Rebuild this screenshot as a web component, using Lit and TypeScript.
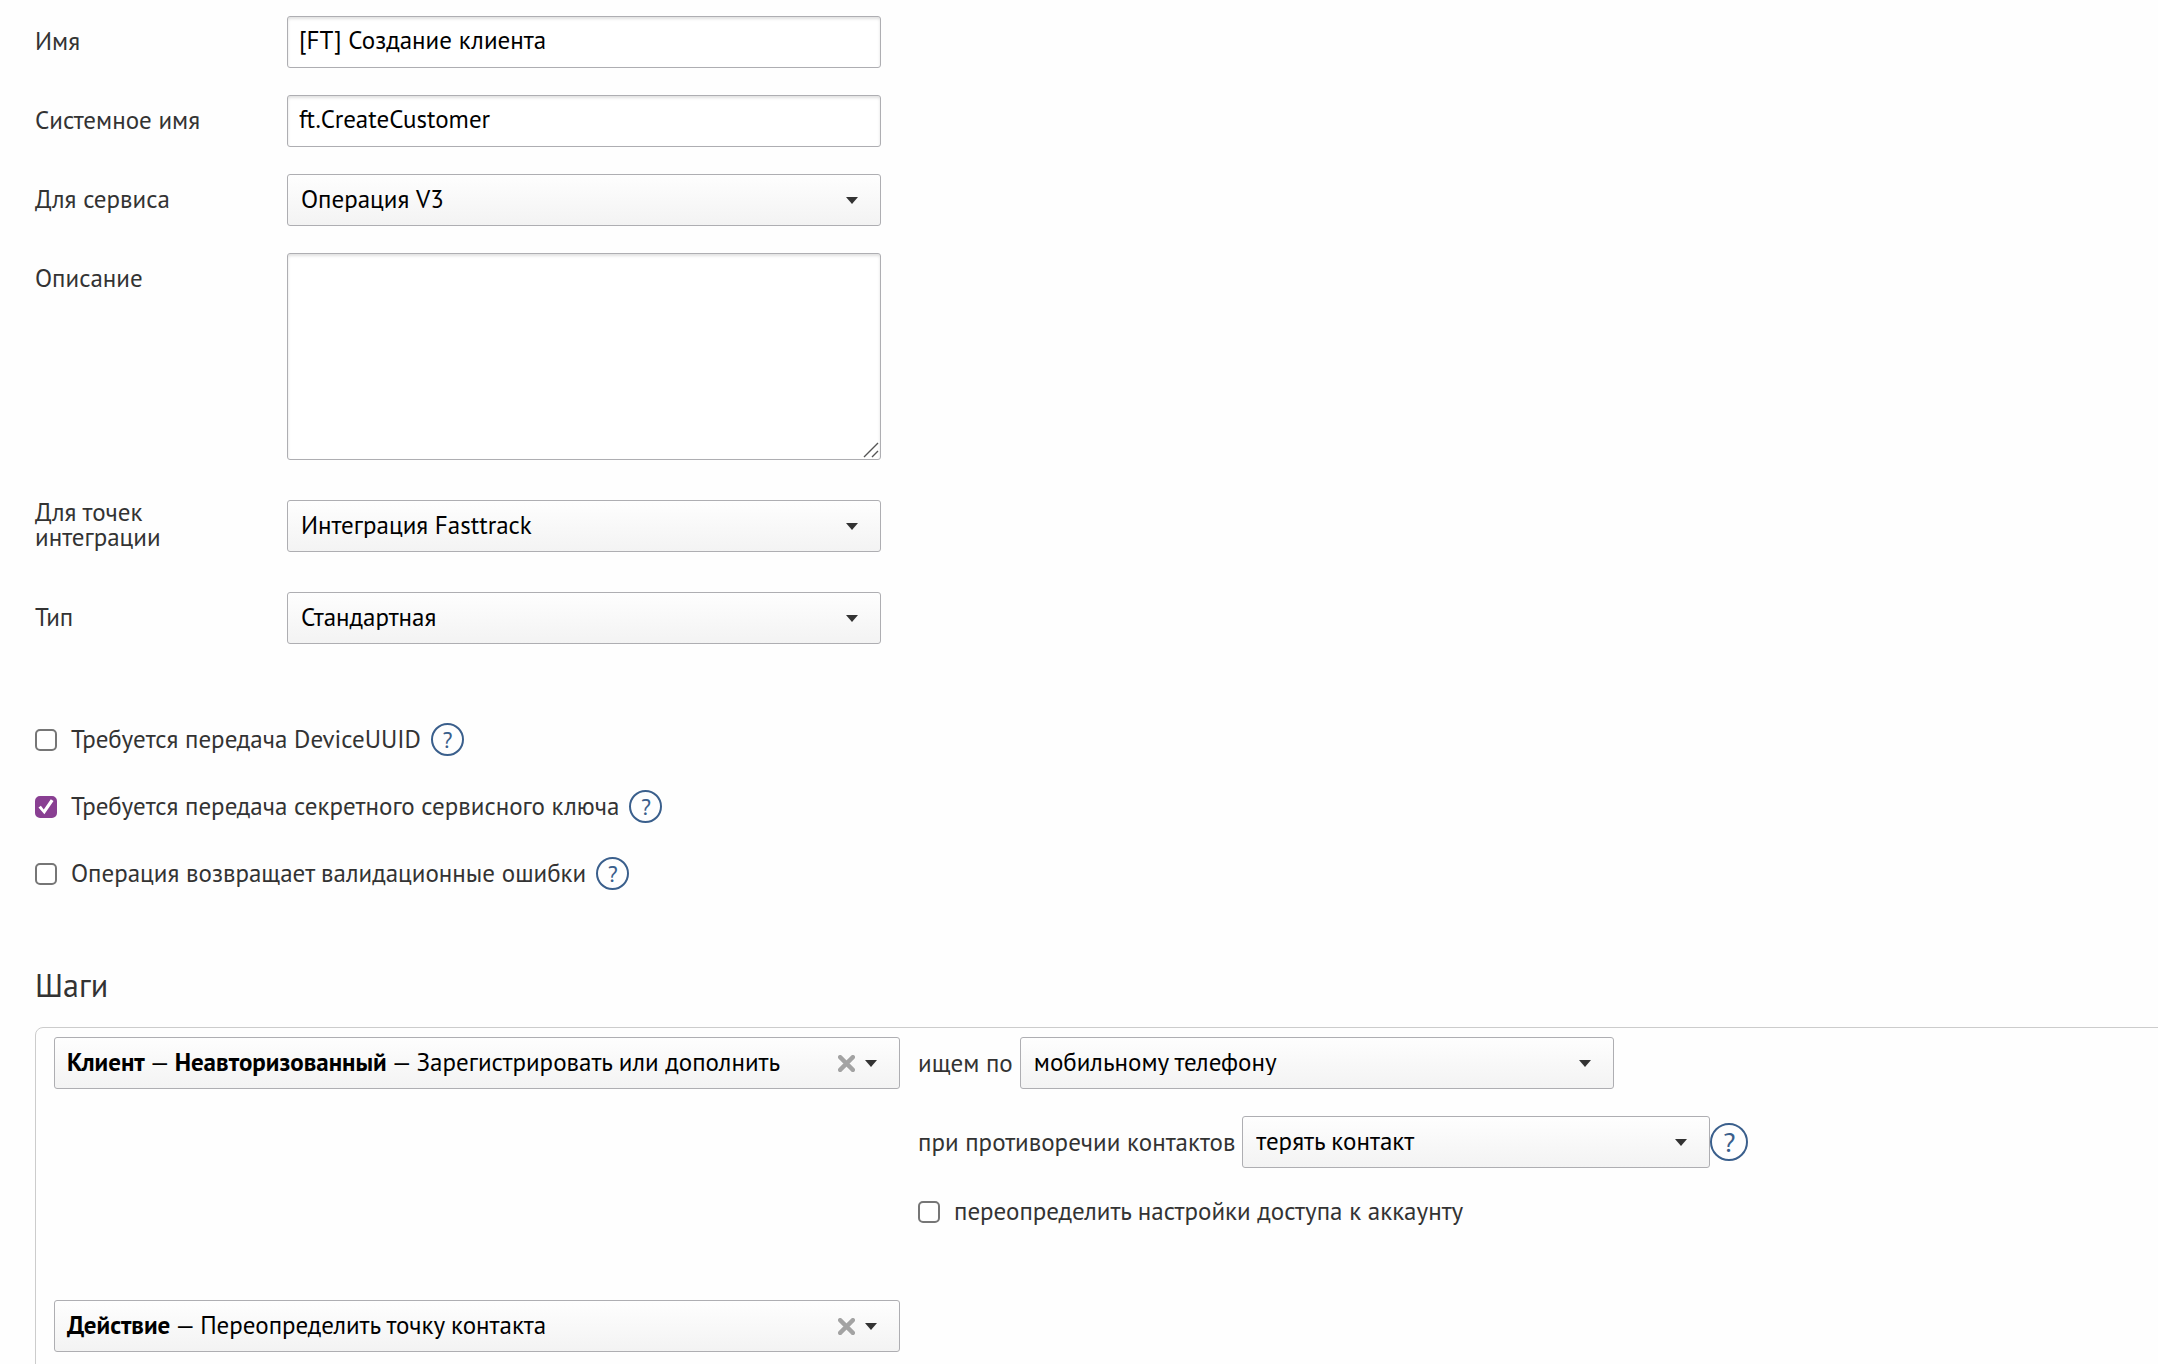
import { LitElement, html, css, svg, nothing } from "lit";
import { customElement } from "lit/decorators.js";

const arrow = html`<svg class="arrow" viewBox="0 0 12 7" aria-hidden="true">
  <path d="M0 0H12L6 7Z" fill="#333" />
</svg>`;

const select = (id: string, value: string, size = "") => html`
  <span class="select ${size}">
    <select id=${id}>
      <option>${value}</option>
    </select>
    ${arrow}
  </span>
`;

const help = (size = "") => html`
  <button class="help ${size}" type="button" aria-label="Справка">?</button>
`;

const check = (id: string, text: string, checked: boolean, hint: boolean) => html`
  <div class="check">
    <input type="checkbox" id=${id} .checked=${checked} />
    <label for=${id}>${text}</label>
    ${hint ? help() : nothing}
  </div>
`;

const combo = (path: string[], action: string) => html`
  <div class="combo">
    <button class="combo-value" type="button" aria-haspopup="listbox">
      ${path.map((part) => html`<b>${part}</b> — `)}${action}
    </button>
    <button class="combo-clear" type="button" aria-label="Очистить">
      <svg viewBox="0 0 16 16" aria-hidden="true">
        <path d="M2 2L14 14M14 2L2 14" stroke="#a3a3a3" stroke-width="4" stroke-linecap="round" />
      </svg>
    </button>
    ${arrow}
  </div>
`;

@customElement("app-root")
export class AppRoot extends LitElement {
  static styles = css`
    :host {
      display: block;
      min-height: 100vh;
      box-sizing: border-box;
      overflow: hidden;
      padding: 16px 0 0 35px;
      background: #fefefe;
      color: #333;
      font: 25px/25px "PT Sans", Lato, "Liberation Sans", sans-serif;
    }
    *,
    *::before {
      box-sizing: border-box;
    }
    input,
    select,
    textarea,
    button {
      margin: 0;
      font: inherit;
      color: #000;
    }
    form {
      display: flex;
      flex-direction: column;
    }
    .fields {
      display: grid;
      grid-template-columns: 252px minmax(0, 594px);
      row-gap: 27px;
    }
    .fields > label {
      display: flex;
      align-items: center;
      height: 52px;
      padding: 0 40px 2px 0;
    }
    .text,
    .area textarea {
      width: 100%;
      border: 1px solid #aeaeb2;
      border-radius: 3px;
      background: #fff;
      box-shadow: inset 0 2px 3px #0000001f;
    }
    .text {
      height: 52px;
      padding: 0 11px 4px;
    }
    .area {
      display: grid;
      margin-bottom: 13px;
    }
    .area textarea {
      grid-area: 1 / 1;
      height: 207px;
      padding: 11px;
      resize: vertical;
    }
    .area textarea::-webkit-resizer {
      display: none;
    }
    .grip {
      grid-area: 1 / 1;
      place-self: end;
      width: 16px;
      height: 16px;
      margin: 2px;
      pointer-events: none;
    }
    .spaced {
      margin-bottom: 13px;
    }
    .select {
      display: grid;
      align-items: center;
      height: 52px;
    }
    .select select {
      grid-area: 1 / 1;
      appearance: none;
      width: 100%;
      height: 52px;
      padding: 0 40px 2px 13px;
    }
    .select select,
    .combo {
      border: 1px solid #aeaeb2;
      border-radius: 3px;
      background: linear-gradient(#fefefe, #f3f3f3);
    }
    .arrow {
      width: 12px;
      height: 7px;
      pointer-events: none;
    }
    .select .arrow {
      grid-area: 1 / 1;
      justify-self: end;
      margin-right: 23px;
    }
    .wide {
      width: 594px;
    }
    .medium {
      width: 468px;
    }
    .checks {
      display: flex;
      flex-direction: column;
      gap: 34px;
      margin-top: 79px;
    }
    .check {
      display: flex;
      align-items: center;
      height: 33px;
    }
    .check input {
      appearance: none;
      display: grid;
      place-items: center;
      width: 22px;
      height: 22px;
      margin-right: 14px;
      border: 2px solid #767676;
      border-radius: 5px;
      background: #fff;
    }
    .check input:checked {
      border-color: #893f92;
      background: #893f92;
    }
    .check input:checked::before {
      content: "";
      width: 16px;
      height: 16px;
      background: #fff;
      clip-path: polygon(3% 57%, 18% 46%, 36% 68%, 80% 4%, 97% 15%, 40% 98%);
    }
    .help {
      display: grid;
      place-items: center;
      flex: none;
      width: 33px;
      height: 33px;
      margin-left: 10px;
      padding: 0 0 1px;
      border: 2px solid #3a5f8c;
      border-radius: 50%;
      background: none;
      color: #3a5f8c;
      font-size: 23px;
    }
    .help.large {
      width: 38px;
      height: 38px;
      margin: 0;
      font-size: 28px;
    }
    h2 {
      margin: 75px 0 22px;
      font-size: 32px;
      line-height: 40px;
      font-weight: 400;
    }
    .steps {
      display: flex;
      flex-direction: column;
      gap: 56px;
      margin-right: -8px;
      padding: 9px 18px 60px;
      border: 1px solid #ccc;
      border-radius: 8px;
    }
    .step {
      display: flex;
      align-items: flex-start;
      gap: 18px;
    }
    .combo {
      display: flex;
      align-items: center;
      flex: none;
      width: 846px;
      height: 52px;
      padding-right: 22px;
    }
    .combo button {
      height: 100%;
      border: 0;
      background: none;
    }
    .combo-value {
      flex: 1;
      padding: 0 0 2px 12px;
      text-align: left;
      white-space: nowrap;
    }
    .combo-clear {
      display: grid;
      place-items: center;
      padding: 0 10px;
    }
    .combo-clear svg {
      width: 17px;
      height: 17px;
    }
    .options {
      display: flex;
      flex-direction: column;
      gap: 27px;
      padding-bottom: 16px;
    }
    .option {
      display: flex;
      align-items: center;
    }
    .option > label {
      margin-right: 7px;
    }
  `;

  render() {
    return html`
      <form>
        <div class="fields">
          <label for="name">Имя</label>
          <input class="text" id="name" type="text" value="[FT] Создание клиента" />
          <label for="system-name">Системное имя</label>
          <input class="text" id="system-name" type="text" value="ft.CreateCustomer" />
          <label for="service">Для сервиса</label>
          ${select("service", "Операция V3")}
          <label for="description">Описание</label>
          <div class="area">
            <textarea id="description"></textarea>
            <svg class="grip" viewBox="0 0 16 16" aria-hidden="true">
              <path d="M1 15L15 1M9 15L15 9" fill="none" stroke="#555" stroke-width="1.4" />
            </svg>
          </div>
          <label for="points">Для точек интеграции</label>
          ${select("points", "Интеграция Fasttrack", "spaced")}
          <label for="type">Тип</label>
          ${select("type", "Стандартная")}
        </div>

        <div class="checks">
          ${check("device", "Требуется передача DeviceUUID", false, true)}
          ${check("secret", "Требуется передача секретного сервисного ключа", true, true)}
          ${check("validation", "Операция возвращает валидационные ошибки", false, true)}
        </div>

        <h2>Шаги</h2>
        <section class="steps">
          <div class="step">
            ${combo(["Клиент", "Неавторизованный"], "Зарегистрировать или дополнить")}
            <div class="options">
              <div class="option">
                <label for="search">ищем по</label>
                ${select("search", "мобильному телефону", "wide")}
              </div>
              <div class="option">
                <label for="conflict">при противоречии контактов</label>
                ${select("conflict", "терять контакт", "medium")} ${help("large")}
              </div>
              ${check("access", "переопределить настройки доступа к аккаунту", false, false)}
            </div>
          </div>
          <div class="step">${combo(["Действие"], "Переопределить точку контакта")}</div>
        </section>
      </form>
    `;
  }
}
